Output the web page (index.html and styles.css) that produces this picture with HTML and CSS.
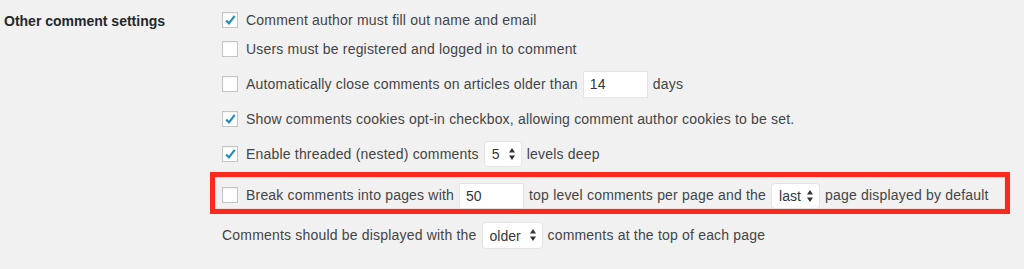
FILE: index.html
```html
<!DOCTYPE html>
<html lang="en">
<head>
    <meta charset="UTF-8">
    <title>Discussion settings</title>
    <link rel="stylesheet" href="styles.css">
</head>
<body>
<div class="setting">
    <div class="setting-label">Other comment settings</div>
    <div class="options">
        <div class="row row-first">
            <span class="box"><svg viewBox="0 0 16 16"><path d="M3.6 8.6 L6.8 11.8 L13.4 3.2" /></svg></span>
            <span>Comment author must fill out name and email</span>
        </div>
        <div class="row row-near">
            <span class="box"></span>
            <span>Users must be registered and logged in to comment</span>
        </div>
        <div class="row row-control">
            <span class="box"></span>
            <span>Automatically close comments on articles older than</span>
            <input class="num num-days" value="14">
            <span>days</span>
        </div>
        <div class="row">
            <span class="box"><svg viewBox="0 0 16 16"><path d="M3.6 8.6 L6.8 11.8 L13.4 3.2" /></svg></span>
            <span>Show comments cookies opt-in checkbox, allowing comment author cookies to be set.</span>
        </div>
        <div class="row row-control">
            <span class="box"><svg viewBox="0 0 16 16"><path d="M3.6 8.6 L6.8 11.8 L13.4 3.2" /></svg></span>
            <span>Enable threaded (nested) comments</span>
            <span class="select select-depth">
                <select><option>5</option></select>
                <svg viewBox="0 0 6 12"><path d="M3 0 L6 4.5 L0 4.5 Z M0 7.5 L6 7.5 L3 12 Z" /></svg>
            </span>
            <span>levels deep</span>
        </div>
        <div class="highlight">
            <div class="row row-control">
                <span class="box"></span>
                <span>Break comments into pages with</span>
                <input class="num num-pages" value="50">
                <span>top level comments per page and the</span>
                <span class="select select-page">
                    <select><option>last</option></select>
                    <svg viewBox="0 0 6 12"><path d="M3 0 L6 4.5 L0 4.5 Z M0 7.5 L6 7.5 L3 12 Z" /></svg>
                </span>
                <span>page displayed by default</span>
            </div>
        </div>
        <div class="row row-control row-last">
            <span>Comments should be displayed with the</span>
            <span class="select select-order">
                <select><option>older</option></select>
                <svg viewBox="0 0 6 12"><path d="M3 0 L6 4.5 L0 4.5 Z M0 7.5 L6 7.5 L3 12 Z" /></svg>
            </span>
            <span>comments at the top of each page</span>
        </div>
    </div>
</div>
</body>
</html>
```

FILE: styles.css
```css
body {
    margin: 0;
    background: #f1f1f1;
    color: #444;
    font-family: "Liberation Sans", Arial, sans-serif;
    font-size: 14px;
}

.setting {
    display: grid;
    grid-template-columns: 218px 1fr;
    padding-left: 4px;
}

.setting-label {
    padding-top: 13px;
    font-weight: bold;
    color: #23282d;
}

.options {
    display: flex;
    flex-direction: column;
    padding-top: 8px;
    letter-spacing: .19px;
}

.row {
    display: flex;
    align-items: center;
    gap: 5px;
    height: 24px;
    margin-top: 9px;
    white-space: nowrap;
}

.row-first {
    margin-top: 0;
}

.row-near {
    margin-top: 5px;
}

.row-control {
    height: 28px;
}

.row-last {
    margin-top: 7px;
}

.box {
    width: 16px;
    height: 16px;
    box-sizing: border-box;
    margin-right: 3px;
    border: 1px solid #c3c6c9;
    background: #fff;
    box-shadow: inset 0 1px 2px rgba(0, 0, 0, .06);
    flex: none;
}

.box svg {
    display: block;
    width: 14px;
    height: 14px;
}

.box path {
    fill: none;
    stroke: #1e8cbe;
    stroke-width: 2.4;
}

.num {
    box-sizing: border-box;
    height: 27px;
    margin: 0;
    padding: 0 6px;
    border: 1px solid #e4e4e4;
    background: #fff;
    color: #32373c;
    font: inherit;
    outline: none;
}

.num-days {
    width: 65px;
}

.num-pages {
    width: 65px;
    height: 26px;
    margin-top: 1px;
}

.select {
    position: relative;
    display: inline-block;
    height: 26px;
}

.select select {
    appearance: none;
    -webkit-appearance: none;
    box-sizing: border-box;
    height: 26px;
    margin: 0;
    padding: 0 0 0 7px;
    border: 1px solid #e4e4e4;
    border-radius: 4px;
    background: #fff;
    color: #32373c;
    font: inherit;
}

.select svg {
    position: absolute;
    right: 7px;
    top: 7px;
    width: 6px;
    height: 12px;
    fill: #333;
    pointer-events: none;
}

.select-depth select {
    width: 38px;
}

.select-page select {
    width: 49px;
}

.select-page {
    margin-top: 1px;
}

.select-order select {
    width: 61px;
    height: 27px;
}

.highlight {
    width: 800px;
    box-sizing: border-box;
    margin: 4px 0 0 -12px;
    padding: 4px 0 0 7px;
    height: 42px;
    border: 5px solid #fc2a1c;
    box-shadow: inset 0 0 0 1px #f7dcd9;
}

.highlight .row {
    margin-top: 0;
}
```
